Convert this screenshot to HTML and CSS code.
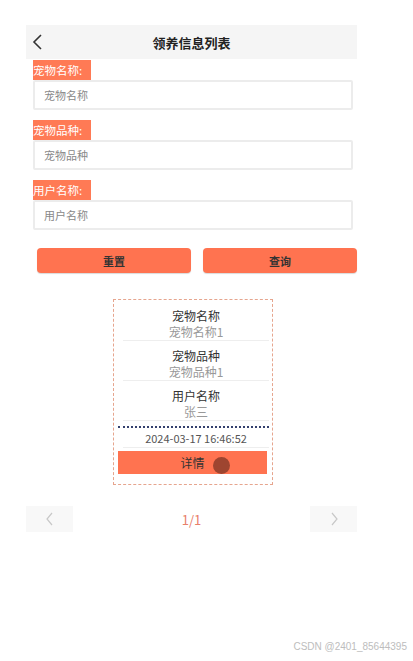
FILE: index.html
```html
<html>
    <head>
        <meta name="viewport" content="width=device-width, initial-scale=1">
        <title>领养信息列表</title>
        <link rel="stylesheet" href="styles.css">
    </head>
    <body>
        <div class="page">
            <div class="nav-bar">
                <span class="back">
                    <svg width="12" height="16" viewBox="0 0 12 16"><path d="M9 1 L2 8 L9 15" fill="none" stroke="#333" stroke-width="1.6"/></svg>
                </span>
                <span class="nav-title">领养信息列表</span>
            </div>
            <div class="search-form">
                <div class="form-item">
                    <div class="form-label">宠物名称:</div>
                    <div class="form-input">宠物名称</div>
                </div>
                <div class="form-item">
                    <div class="form-label">宠物品种:</div>
                    <div class="form-input">宠物品种</div>
                </div>
                <div class="form-item">
                    <div class="form-label">用户名称:</div>
                    <div class="form-input">用户名称</div>
                </div>
            </div>
            <div class="btn-box">
                <button type="button" class="btn">重置</button>
                <button type="button" class="btn">查询</button>
            </div>
            <div class="list">
                <div class="card">
                    <div class="card-row">
                        <div class="row-label">宠物名称</div>
                        <div class="row-value">宠物名称1</div>
                    </div>
                    <div class="card-row">
                        <div class="row-label">宠物品种</div>
                        <div class="row-value">宠物品种1</div>
                    </div>
                    <div class="card-row">
                        <div class="row-label">用户名称</div>
                        <div class="row-value">张三</div>
                    </div>
                    <div class="dotted-line"></div>
                    <div class="card-time">2024-03-17 16:46:52</div>
                    <div class="detail-btn">
                        详情
                        <span class="ripple"></span>
                    </div>
                </div>
            </div>
            <div class="pager">
                <div class="pager-btn">
                    <svg width="10" height="14" viewBox="0 0 10 14"><path d="M7 1 L2 7 L7 13" fill="none" stroke="#c8c8c8" stroke-width="1.2"/></svg>
                </div>
                <div class="pager-num">1/1</div>
                <div class="pager-btn">
                    <svg width="10" height="14" viewBox="0 0 10 14"><path d="M3 1 L8 7 L3 13" fill="none" stroke="#c8c8c8" stroke-width="1.2"/></svg>
                </div>
            </div>
        </div>
        <div class="watermark">CSDN @2401_85644395</div>
    </body>
</html>
```

FILE: styles.css
```css
body {
    margin: 0;
    background: #fff;
    font-family: "Noto Sans CJK SC", "Noto Sans", sans-serif;
    color: #333;
}
.page {
    width: 331px;
    margin-left: 26px;
    padding-top: 25px;
}
.nav-bar {
    height: 34px;
    background: #f5f5f5;
    display: flex;
    align-items: center;
    justify-content: center;
    position: relative;
}
.back {
    position: absolute;
    left: 6px;
    top: 9px;
    line-height: 0;
}
.nav-title {
    font-size: 13px;
    font-weight: 700;
    color: #222;
}
.search-form {
    padding-left: 7px;
    margin-top: 1px;
}
.form-item {
    margin-bottom: 10px;
}
.form-label {
    width: 58px;
    height: 20px;
    line-height: 20px;
    background: #ff7a55;
    color: #fff;
    font-size: 11.5px;
    white-space: nowrap;
    overflow: hidden;
}
.form-input {
    width: 320px;
    height: 30px;
    box-sizing: border-box;
    border: 2px solid #ececec;
    border-radius: 2px;
    line-height: 26px;
    padding-left: 9px;
    font-size: 11px;
    color: #888;
}
.btn-box {
    display: flex;
    gap: 12px;
    padding-left: 11px;
    margin-top: 18px;
}
.btn {
    flex: 1;
    height: 25px;
    border: none;
    border-radius: 4px;
    background: #ff7350;
    color: #333;
    font-weight: 700;
    font-size: 11px;
    font-family: "Noto Sans CJK SC", sans-serif;
    box-shadow: 0 1px 1px rgba(0, 0, 0, 0.15);
    padding: 0;
}
.list {
    display: flex;
    justify-content: center;
    padding-left: 3px;
    margin-top: 26px;
}
.card {
    width: 160px;
    box-sizing: border-box;
    border: 1px dashed #e6a58e;
    padding: 0 3px 10px 4px;
}
.card-row {
    margin-left: 5px;
    padding-top: 8px;
    border-bottom: 1px solid #eeeeee;
    text-align: center;
    font-size: 12px;
    line-height: 16px;
}
.card-row + .card-row {
    padding-top: 7px;
}
.row-label {
    color: #333;
}
.row-value {
    color: #999;
}
.dotted-line {
    margin-top: 5px;
    border-top: 2px dotted #34406e;
}
.card-time {
    margin-left: 5px;
    margin-top: 2px;
    line-height: 16px;
    padding-bottom: 1px;
    text-align: center;
    font-size: 11px;
    color: #555;
    border-bottom: 1px solid #eeeeee;
}
.detail-btn {
    margin-top: 3px;
    margin-right: 2px;
    height: 23px;
    line-height: 23px;
    background: #ff7350;
    text-align: center;
    font-size: 12px;
    color: #333;
    position: relative;
}
.ripple {
    position: absolute;
    left: 95px;
    top: 6px;
    width: 17px;
    height: 17px;
    border-radius: 50%;
    background: #9e4530;
}
.pager {
    display: flex;
    justify-content: space-between;
    align-items: center;
    margin-top: 21px;
}
.pager-btn {
    width: 47px;
    height: 26px;
    background: #f8f8f8;
    display: flex;
    align-items: center;
    justify-content: center;
}
.pager-num {
    font-size: 13px;
    color: #e8806a;
}
.watermark {
    position: absolute;
    right: 6px;
    top: 641px;
    font-size: 10px;
    color: #bdbdbd;
    font-family: "Liberation Sans", sans-serif;
}
```
